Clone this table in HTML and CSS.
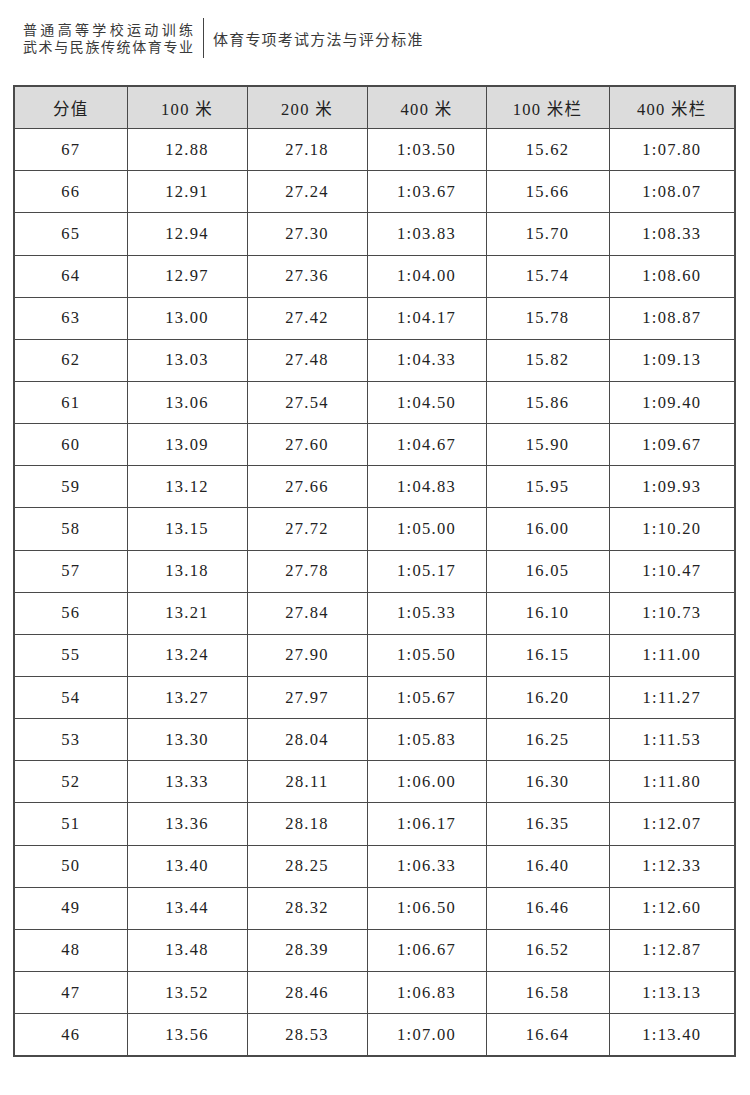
FILE: index.html
```html
<!DOCTYPE html>
<html lang="zh">
<head>
<meta charset="utf-8">
<link rel="stylesheet" href="styles.css">
</head>
<body>
<header class="head">
  <div class="head-left">
    <div class="line">普通高等学校运动训练</div>
    <div class="line">武术与民族传统体育专业</div>
  </div>
  <div class="head-right">体育专项考试方法与评分标准</div>
</header>
<table class="score">
  <colgroup>
    <col class="c1"><col class="c2"><col class="c3"><col class="c4"><col class="c5"><col class="c6">
  </colgroup>
  <thead>
    <tr><th>分值</th><th>100 米</th><th>200 米</th><th>400 米</th><th>100 米栏</th><th>400 米栏</th></tr>
  </thead>
  <tbody>
    <tr><td>67</td><td>12.88</td><td>27.18</td><td>1:03.50</td><td>15.62</td><td>1:07.80</td></tr>
    <tr><td>66</td><td>12.91</td><td>27.24</td><td>1:03.67</td><td>15.66</td><td>1:08.07</td></tr>
    <tr><td>65</td><td>12.94</td><td>27.30</td><td>1:03.83</td><td>15.70</td><td>1:08.33</td></tr>
    <tr><td>64</td><td>12.97</td><td>27.36</td><td>1:04.00</td><td>15.74</td><td>1:08.60</td></tr>
    <tr><td>63</td><td>13.00</td><td>27.42</td><td>1:04.17</td><td>15.78</td><td>1:08.87</td></tr>
    <tr><td>62</td><td>13.03</td><td>27.48</td><td>1:04.33</td><td>15.82</td><td>1:09.13</td></tr>
    <tr><td>61</td><td>13.06</td><td>27.54</td><td>1:04.50</td><td>15.86</td><td>1:09.40</td></tr>
    <tr><td>60</td><td>13.09</td><td>27.60</td><td>1:04.67</td><td>15.90</td><td>1:09.67</td></tr>
    <tr><td>59</td><td>13.12</td><td>27.66</td><td>1:04.83</td><td>15.95</td><td>1:09.93</td></tr>
    <tr><td>58</td><td>13.15</td><td>27.72</td><td>1:05.00</td><td>16.00</td><td>1:10.20</td></tr>
    <tr><td>57</td><td>13.18</td><td>27.78</td><td>1:05.17</td><td>16.05</td><td>1:10.47</td></tr>
    <tr><td>56</td><td>13.21</td><td>27.84</td><td>1:05.33</td><td>16.10</td><td>1:10.73</td></tr>
    <tr><td>55</td><td>13.24</td><td>27.90</td><td>1:05.50</td><td>16.15</td><td>1:11.00</td></tr>
    <tr><td>54</td><td>13.27</td><td>27.97</td><td>1:05.67</td><td>16.20</td><td>1:11.27</td></tr>
    <tr><td>53</td><td>13.30</td><td>28.04</td><td>1:05.83</td><td>16.25</td><td>1:11.53</td></tr>
    <tr><td>52</td><td>13.33</td><td>28.11</td><td>1:06.00</td><td>16.30</td><td>1:11.80</td></tr>
    <tr><td>51</td><td>13.36</td><td>28.18</td><td>1:06.17</td><td>16.35</td><td>1:12.07</td></tr>
    <tr><td>50</td><td>13.40</td><td>28.25</td><td>1:06.33</td><td>16.40</td><td>1:12.33</td></tr>
    <tr><td>49</td><td>13.44</td><td>28.32</td><td>1:06.50</td><td>16.46</td><td>1:12.60</td></tr>
    <tr><td>48</td><td>13.48</td><td>28.39</td><td>1:06.67</td><td>16.52</td><td>1:12.87</td></tr>
    <tr><td>47</td><td>13.52</td><td>28.46</td><td>1:06.83</td><td>16.58</td><td>1:13.13</td></tr>
    <tr><td>46</td><td>13.56</td><td>28.53</td><td>1:07.00</td><td>16.64</td><td>1:13.40</td></tr>
  </tbody>
</table>
</body>
</html>
```

FILE: styles.css
```css
html, body {
  margin: 0;
  padding: 0;
  background: #ffffff;
}

body {
  font-family: "Liberation Serif", "Noto Sans CJK SC", serif;
  color: #2a2a2a;
}

.head {
  display: flex;
  align-items: center;
  padding: 18px 0 0 23px;
  height: 40px;
}

.head-left {
  font-family: "Noto Sans CJK SC", sans-serif;
  font-size: 14px;
  line-height: 17.5px;
  color: #3a3a3a;
  width: 170px;
  padding-right: 10px;
  border-right: 1.5px solid #444;
  height: 40px;
  display: flex;
  flex-direction: column;
  justify-content: center;
}

.head-left .line {
  text-align: justify;
  text-align-last: justify;
  text-justify: inter-character;
}

.head-right {
  font-family: "Noto Sans CJK SC", sans-serif;
  font-size: 15px;
  letter-spacing: 1.2px;
  color: #3a3a3a;
  padding-left: 9px;
}

.score {
  margin: 27px 0 0 13px;
  width: 721px;
  border-collapse: collapse;
  table-layout: fixed;
  border: 2px solid #4a4a4a;
}

.c1 { width: 113px; }
.c2 { width: 120px; }
.c3 { width: 120px; }
.c4 { width: 119px; }
.c5 { width: 123px; }
.c6 { width: 126px; }

.score th,
.score td {
  border: 1.5px solid #4a4a4a;
  height: 41.15px;
  padding: 0;
  text-align: center;
  vertical-align: middle;
  font-size: 16.5px;
  letter-spacing: 1.3px;
  font-weight: normal;
  color: #222;
}

.score th {
  background: #dcdcdc;
}
```
